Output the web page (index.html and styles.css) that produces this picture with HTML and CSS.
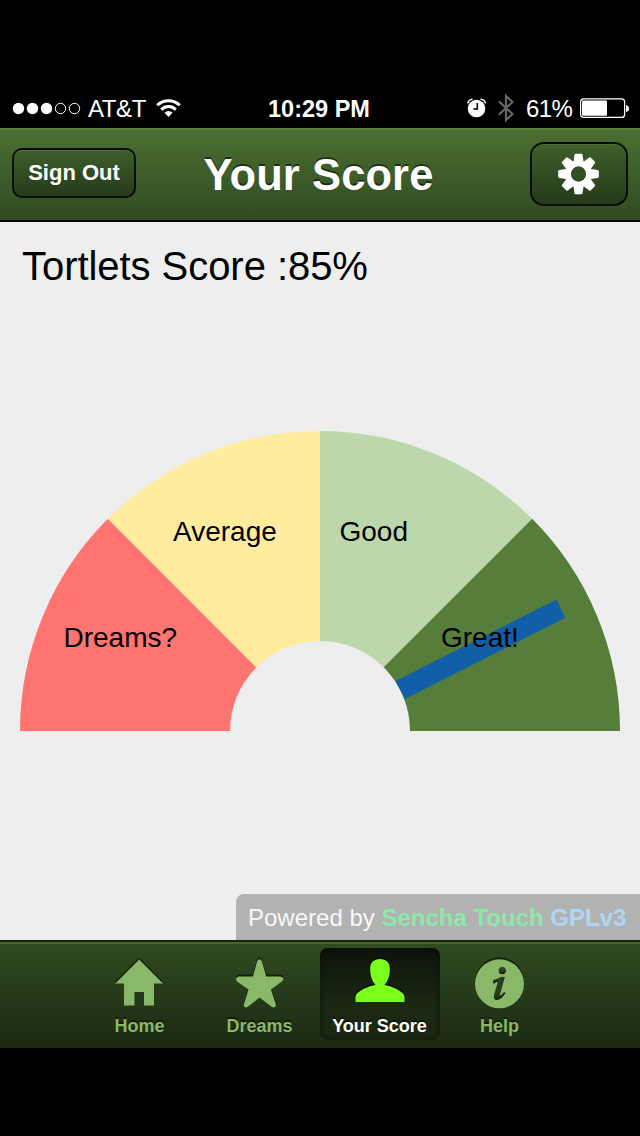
FILE: index.html
```html
<!DOCTYPE html>
<html lang="en">
<head>
<meta charset="utf-8">
<title>Your Score</title>
<link rel="stylesheet" href="styles.css">
</head>
<body>
<div class="phone">
  <div class="status">
    <div class="status-left">
      <svg width="70" height="14" viewBox="0 0 70 14"><g fill="#fff"><circle cx="6.5" cy="7.500" r="5.7"/><circle cx="20.5" cy="7.500" r="5.7"/><circle cx="34.5" cy="7.500" r="5.7"/></g><g fill="none" stroke="#fff" stroke-width="1"><circle cx="48.5" cy="7.500" r="5.2"/><circle cx="62.5" cy="7.500" r="5.2"/></g></svg>
      <span class="carrier">AT&amp;T</span>
      <svg class="wifi" width="26" height="20" viewBox="0 0 26 20"><path d="M12.500 19 8.500 14.800a5.600 5.600 0 0 1 8 0z" fill="#fff"/><g fill="none" stroke="#fff" stroke-width="3"><path d="M5.300 11.600a10.200 10.200 0 0 1 14.400 0"/><path d="M1.200 7.300a16 16 0 0 1 22.600 0"/></g></svg>
    </div>
    <div class="clock">10:29 PM</div>
    <div class="status-right">
      <svg width="20" height="20" viewBox="0 0 20 20"><circle cx="9.500" cy="10.500" r="8.800" fill="#fff"/><path d="M10.300 5v6H6.300" fill="none" stroke="#000" stroke-width="1.6"/><path d="M.8 5.500Q1.300 1.500 5.500 1.200M18.500 5.500Q18 1.500 13.500 1.200" fill="none" stroke="#fff" stroke-width="1.4"/></svg>
      <svg class="bluetooth" width="16" height="28" viewBox="0 0 16 28"><path d="M.8 7.200 14.500 20 8 26V2l6.500 6L.8 20.800" fill="none" stroke="#666" stroke-width="2.200"/></svg>
      <span class="percent">61%</span>
      <svg width="49" height="20" viewBox="0 0 49 20"><rect x=".6" y=".9" width="44" height="18.500" rx="3" fill="none" stroke="#fff" stroke-width="1.200"/><rect x="2" y="2.500" width="25" height="15.300" rx="1" fill="#fff"/><path d="M46 7q3 .5 3 3.500t-3 3.500z" fill="#fff"/></svg>
    </div>
  </div>

  <header class="toolbar">
    <button class="button sign-out">Sign Out</button>
    <h1 class="title">Your Score</h1>
    <button class="button settings" aria-label="Settings">
      <svg width="42" height="42" viewBox="-20.500 -21 42 42"><defs><path id="tooth" d="M-5.200-11-4-19.200Q-3.800-20.300-2.800-20.300H2.800Q3.800-20.300 4-19.200L5.200-11Z"/></defs><g fill="#fff"><use href="#tooth"/><use href="#tooth" transform="rotate(45)"/><use href="#tooth" transform="rotate(90)"/><use href="#tooth" transform="rotate(135)"/><use href="#tooth" transform="rotate(180)"/><use href="#tooth" transform="rotate(225)"/><use href="#tooth" transform="rotate(270)"/><use href="#tooth" transform="rotate(315)"/></g><circle r="10.500" fill="none" stroke="#fff" stroke-width="6.200"/><circle r="7.400" fill="#344e23"/></svg>
    </button>
  </header>

  <main class="content">
    <p class="score">Tortlets Score :85%</p>
    <svg class="gauge" width="600" height="300" viewBox="0 0 600 300">
      <path fill="#ff7371" d="M0 300A300 300 0 0 1 87.870 87.870L236.360 236.360A90 90 0 0 0 210 300Z"/>
      <path fill="#ffec9f" d="M87.870 87.870A300 300 0 0 1 300 0V210A90 90 0 0 0 236.360 236.360Z"/>
      <path fill="#bcd8ab" d="M300 0A300 300 0 0 1 512.130 87.870L363.640 236.360A90 90 0 0 0 300 210Z"/>
      <path fill="#567e3a" d="M512.130 87.870A300 300 0 0 1 600 300H390A90 90 0 0 0 363.640 236.360Z"/>
      <path fill="#115fa6" d="M375.500 250 536.500 168.500 545.300 186.700 385 268Z"/>
      <g class="gauge-labels">
        <text x="43.500" y="216">Dreams?</text>
        <text x="153" y="110">Average</text>
        <text x="319.500" y="110">Good</text>
        <text x="421" y="216">Great!</text>
      </g>
    </svg>
    <div class="powered">Powered by <b class="sencha">Sencha Touch</b> <b class="license">GPLv3</b></div>
  </main>

  <nav class="tabs">
    <a class="tab">
      <svg width="50" height="54" viewBox="0 0 50 54"><path d="M24.200 3.500 48 27.500H39V49.500H29V36H19.500V49.500H9V27.500H.3Z"/></svg>
      <span>Home</span>
    </a>
    <a class="tab">
      <svg width="50" height="54" viewBox="0 0 50 54"><path d="M22.200 5Q24.500 1.500 26.800 5L31.200 20.500H45.500Q50 21.500 47.500 25L36 33.500 41 49Q40.500 52.500 37 51L24.500 41.500 12.500 51Q8.800 52.500 8.800 48.500L13.500 33.500 2 25.500Q-.5 21.500 3.500 20.500H18Z"/></svg>
      <span>Dreams</span>
    </a>
    <a class="tab active">
      <svg width="50" height="54" viewBox="0 0 50 54"><path d="M25 3C31 3 34.800 6.500 34.800 12.500C34.800 20 33 25 29.500 28.800C31 29.800 33 29.800 35 30.300C40 32 44.500 34.500 48 37.500Q49.500 39 49.500 41V46H.5V41Q.5 39 2 37.500C5.500 34.500 10 32 15 30.300C17 29.800 19 29.800 20.500 28.800C17 25 15.200 20 15.200 12.500C15.200 6.500 19 3 25 3Z"/></svg>
      <span>Your Score</span>
    </a>
    <a class="tab">
      <svg width="50" height="54" viewBox="0 0 50 54"><path fill-rule="evenodd" d="M24.500 3.300a24.500 24.500 0 1 1 0 49a24.500 24.500 0 1 1 0-49ZM27.300 11a3.600 3.600 0 1 0 0 7.200a3.600 3.600 0 1 0 0-7.200ZM18.500 24Q23 22.800 26.500 20.800L29.800 21 25.300 37Q24.500 40 26 39.200L29 36 30.500 37Q26 44.500 21 44Q18 43 19.200 38.500L22.500 27Q23 25.300 21.500 25.800L18.800 27.800 17.800 26.500Z"/></svg>
      <span>Help</span>
    </a>
  </nav>
</div>
</body>
</html>
```

FILE: styles.css
```css
* { box-sizing: border-box; }
body { margin: 0; background: #000; font-family: "Liberation Sans", Arial, sans-serif; }
svg { display: block; flex: none; }
.phone { width: 640px; height: 1136px; background: #000; display: flex; flex-direction: column; }

.status { height: 128px; padding: 88px 11px 0 12px; display: grid; grid-template-columns: 1fr 102px 1fr; color: #fff; font-size: 24px; line-height: 40px; }
.status-left, .status-right { display: flex; align-items: center; height: 40px; }
.status-right { justify-content: flex-end; }
.carrier { margin: 2px 0 0 6px; width: 58px; letter-spacing: -.4px; white-space: nowrap; }
.wifi { margin-left: 10px; }
.clock { font-weight: bold; font-size: 23.5px; white-space: nowrap; text-align: center; line-height: 42px; margin-left: -3px; }
.bluetooth { margin-left: 11px; }
.percent { margin: 2px 8px 0 12px; width: 46px; letter-spacing: -.6px; white-space: nowrap; }

.toolbar { height: 94px; padding: 0 12px; display: flex; align-items: center; justify-content: space-between; border-bottom: 2px solid #000; background: linear-gradient(#4b7032, #314b21); box-shadow: inset 0 2px #588339; }
.title { margin: 2px 0 0; color: #fff; font-size: 43.5px; line-height: 60px; letter-spacing: .1px; text-shadow: 0 -2px rgba(0,0,0,.5); flex: 1; text-align: center; padding-right: 29px; }
.button { margin: 0; padding: 0; color: #fff; font: bold 22px "Liberation Sans", Arial, sans-serif; border: 2px solid rgba(0,0,0,.82); background: linear-gradient(#3f5f2a, #263a1a); box-shadow: inset 0 1px rgba(110,150,75,.35); display: flex; align-items: center; justify-content: center; }
.sign-out { width: 124px; height: 50px; border-radius: 10px; margin-top: -2px; }
.settings { width: 98px; height: 64px; border-radius: 14px; }

.content { height: 718px; background: #eee; display: flex; flex-direction: column; }
.score { margin: 19px 0 0 22px; font-size: 40px; line-height: 50px; letter-spacing: -.05px; }
.gauge { margin: 140px 0 0 20px; }
.gauge-labels { font-size: 28px; fill: #000; }
.powered { margin-top: auto; align-self: flex-end; width: 404px; height: 46px; padding-left: 12px; border-top-left-radius: 8px; background: #b2b2b2; color: #f8f8f8; font-size: 24px; line-height: 48px; white-space: nowrap; }
.sencha { color: #8ae9ab; }
.license { color: #add8f5; }

.tabs { height: 108px; padding: 6px 80px 0; display: flex; border-top: 2px solid #172410; background: linear-gradient(#314b21, #1b2913); box-shadow: inset 0 2px #426629; }
.tab { width: 120px; height: 92px; padding-top: 8px; border-radius: 8px; display: flex; flex-direction: column; align-items: center; color: #88b868; font-size: 18px; font-weight: bold; line-height: 22px; text-shadow: 0 -2px rgba(0,0,0,.5); }
.tab svg { fill: #88b868; filter: drop-shadow(0 -2px 0 rgba(0,0,0,.5)); }
.tab span { margin: 5px 1px 0 0; }
.active { color: #fff; background: linear-gradient(#0d140a, #1b2913 65%); box-shadow: inset 0 0 8px rgba(0,0,0,.5); }
.active svg { fill: #7aff1c; }
```
